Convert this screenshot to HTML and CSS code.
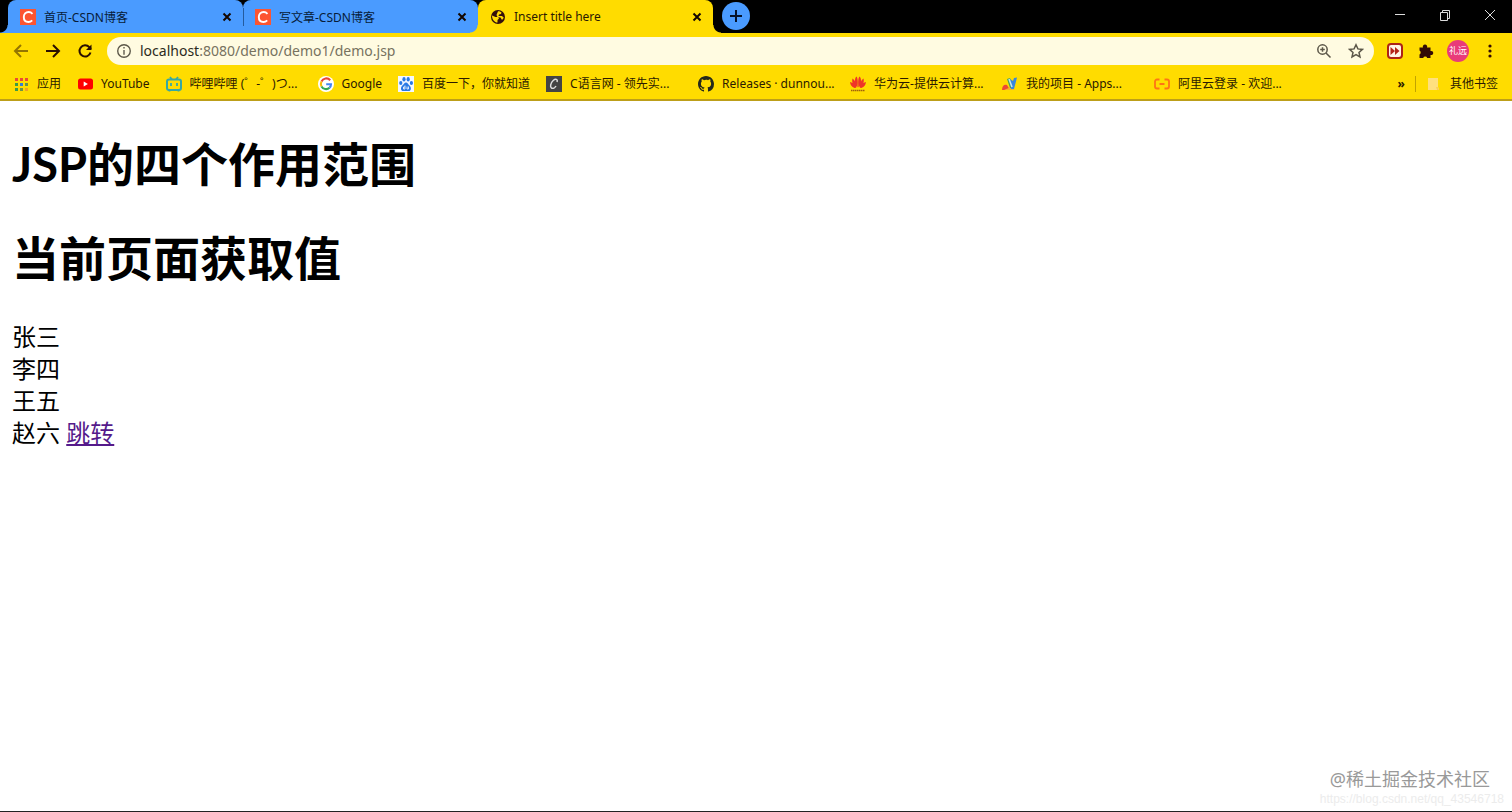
FILE: index.html
```html
<!DOCTYPE html>
<html lang="zh-CN">
<head>
    <meta charset="UTF-8">
    <meta name="viewport" content="width=device-width, initial-scale=1.0">
    <title>Insert title here</title>
    <link rel="stylesheet" href="styles.css">
</head>
<body>
    <header class="browser">
        <div class="tab-strip">
            <div class="tab flare-left">
                <svg class="icon" viewBox="0 0 16 16"><rect width="16" height="16" fill="#fc5531"/><path d="M12.500 4.800C11.300 3.500 10.200 3 8.700 3 5.700 3 3.800 5.200 3.800 8.100c0 3 1.800 4.900 4.600 4.900 1.500 0 2.700-.5 3.800-1.600" fill="none" stroke="#fff" stroke-width="1.900"/></svg>
                <span class="tab-title">首页-CSDN博客</span>
                <button class="tab-close" aria-label="关闭"><svg viewBox="0 0 10 10"><path d="M1.500 1.500l7 7M8.500 1.500l-7 7"/></svg></button>
            </div>
            <div class="tab divided">
                <svg class="icon" viewBox="0 0 16 16"><rect width="16" height="16" fill="#fc5531"/><path d="M12.500 4.800C11.300 3.500 10.200 3 8.700 3 5.700 3 3.800 5.200 3.800 8.100c0 3 1.800 4.900 4.600 4.900 1.500 0 2.700-.5 3.800-1.600" fill="none" stroke="#fff" stroke-width="1.900"/></svg>
                <span class="tab-title">写文章-CSDN博客</span>
                <button class="tab-close" aria-label="关闭"><svg viewBox="0 0 10 10"><path d="M1.500 1.500l7 7M8.500 1.500l-7 7"/></svg></button>
            </div>
            <div class="tab active flare-left flare-right">
                <svg class="icon" viewBox="0 0 16 16"><circle cx="8" cy="8" r="7" fill="#33100c"/><path d="M2 6.500l3.500 1.500h2.500l1 1.500-1.500 1.500v2.600C4.500 13.500 2 10.500 2 6.500zM8 2.200c1.500 0 2.500.3 3.500 1.300l-.5 1.500-2 .5-.5 1.500h3.500l1.800 1.800-1.800 2.200-1.500-2.500-3-.5-1-2z" fill="#ffdc00"/></svg>
                <span class="tab-title">Insert title here</span>
                <button class="tab-close" aria-label="关闭"><svg viewBox="0 0 10 10"><path d="M1.500 1.500l7 7M8.500 1.500l-7 7"/></svg></button>
            </div>
            <button class="new-tab" aria-label="新标签页"><svg viewBox="0 0 14 14"><path d="M7 1v12M1 7h12"/></svg></button>
            <div class="window-buttons">
                <button aria-label="最小化"><svg viewBox="0 0 12 12"><path d="M1 5.500h10"/></svg></button>
                <button aria-label="还原"><svg viewBox="0 0 12 12"><path d="M1.500 3.500h7v8h-7zM3.500 3.500v-2h7v8h-2"/></svg></button>
                <button aria-label="关闭窗口"><svg viewBox="0 0 12 12"><path d="M1 1l10 10M11 1L1 11"/></svg></button>
            </div>
        </div>

        <div class="toolbar">
            <button class="nav faded" aria-label="后退"><svg viewBox="0 0 16 16"><path d="M15 8H2M8 2L2 8l6 6"/></svg></button>
            <button class="nav" aria-label="前进"><svg viewBox="0 0 16 16"><path d="M1 8h13M8 2l6 6-6 6"/></svg></button>
            <button class="nav" aria-label="重新加载"><svg viewBox="0 0 16 16"><path d="M13.500 9.500A5.600 5.600 0 1 1 12.300 4.200L14 6"/><path class="solid" d="M14.500 1.500v5.500H9z"/></svg></button>
            <div class="address">
                <svg class="info" viewBox="0 0 14 14"><circle cx="7" cy="7" r="5.500"/><path d="M7 6.200v4M7 3.600v1.300"/></svg>
                <a class="url" href="#"><span class="host">localhost</span>:8080/demo/demo1/demo.jsp</a>
                <button class="tool" aria-label="缩放"><svg viewBox="0 0 16 16"><circle cx="6.500" cy="6.500" r="4.700"/><path d="M10 10l4.500 4.500M4.200 6.500h4.600M6.500 4.200v4.600"/></svg></button>
                <button class="tool" aria-label="加入书签"><svg viewBox="0 0 16 16"><path d="M8 1.800l1.900 4.100 4.500.5-3.400 3 1 4.500L8 11.600l-4 2.300 1-4.500-3.400-3 4.500-.5z"/></svg></button>
            </div>
            <div class="extensions">
                <button aria-label="视频加速"><svg viewBox="0 0 16 16"><rect x="1" y="1" width="14" height="14" rx="3" fill="#fff4e6" stroke="#ad2216" stroke-width="2"/><path d="M3.500 4l4.500 4-4.500 4zM8 4l4.500 4L8 12z" fill="#b42318"/></svg></button>
                <button aria-label="扩展程序"><svg viewBox="0 0 16 16"><path d="M1.500 4.500H5a2.200 2.200 0 1 1 4 0h3.500V8a2.100 2.100 0 1 1 0 4v3H9.200a2.100 2.100 0 0 0-4 0H1.500v-3.600a2.100 2.100 0 0 0 0-3.800z" fill="#330b06"/></svg></button>
                <button class="avatar">礼远</button>
                <button aria-label="菜单"><svg viewBox="0 0 16 16" fill="#330b06"><circle cx="8" cy="3" r="1.600"/><circle cx="8" cy="8" r="1.600"/><circle cx="8" cy="13" r="1.600"/></svg></button>
            </div>
        </div>

        <nav class="bookmarks">
            <a href="#" class="bookmark">
                <svg class="icon" viewBox="0 0 16 16"><path d="M2 2h3v3H2zM7 2h3v3H7zM12 2h3v3h-3z" fill="#e94b35"/><path d="M2 7h3v3H2zM2 12h3v3H2z" fill="#3e9b45"/><path d="M7 7h3v3H7z" fill="#367fd3"/><path d="M12 7h3v3h-3zM7 12h3v3H7z" fill="#6b9448"/><path d="M12 12h3v3h-3z" fill="#f1a521"/></svg>
                <span>应用</span>
            </a>
            <a href="#" class="bookmark">
                <svg class="icon" viewBox="0 0 16 16"><rect x="1" y="2.500" width="15" height="11" rx="2.500" fill="#f00"/><path d="M6.700 5.600l4.200 2.400-4.200 2.400z" fill="#fff"/></svg>
                <span>YouTube</span>
            </a>
            <a href="#" class="bookmark wide">
                <svg class="icon" viewBox="0 0 16 16"><rect x="1" y="3.500" width="14" height="10.500" rx="2" fill="none" stroke="#36a8a4" stroke-width="2"/><path d="M4 1l2 2.500M12 1l-2 2.500M5 7v3M11 7v3M3.500 14v1.500M12.500 14v1.500" fill="none" stroke="#36a8a4" stroke-width="1.800"/></svg>
                <span>哔哩哔哩 (゜-゜)つ...</span>
            </a>
            <a href="#" class="bookmark">
                <svg class="icon" viewBox="0 0 16 16"><circle cx="8" cy="8" r="8" fill="#fff"/><g fill="none" stroke-width="2.100"><path d="M12.200 4.200A5.200 5.200 0 0 0 3.500 5.500" stroke="#ea4335"/><path d="M3.500 5.500a5.200 5.200 0 0 0 0 5" stroke="#fbbc05"/><path d="M3.500 10.500a5.200 5.200 0 0 0 8 1.300" stroke="#34a853"/><path d="M11.500 11.800A5.200 5.200 0 0 0 13 8.200H8.200" stroke="#4285f4"/></g></svg>
                <span>Google</span>
            </a>
            <a href="#" class="bookmark">
                <svg class="icon" viewBox="0 0 16 16"><rect width="16" height="16" fill="#f2f7ff"/><g fill="#2879e5"><ellipse cx="2.800" cy="7" rx="1.600" ry="2.100"/><ellipse cx="6" cy="3.300" rx="1.600" ry="2.200"/><ellipse cx="10.200" cy="3.300" rx="1.600" ry="2.200"/><ellipse cx="13.400" cy="7" rx="1.600" ry="2.100"/><path d="M8 6.500c1.600 0 2 1.600 3.500 2.900 2 1.700 2 5.600-1 5.600H5.400c-3 0-3-3.900-1-5.600C6 8.100 6.400 6.500 8 6.500z"/></g><path d="M7 9.500v3.500H5.500v-2H7M9 10.500V13h1.500v-2.500" fill="none" stroke="#fff" stroke-width=".8"/></svg>
                <span>百度一下，你就知道</span>
            </a>
            <a href="#" class="bookmark wide">
                <svg class="icon" viewBox="0 0 16 16"><rect width="16" height="16" fill="#444"/><path d="M11 6c1-3-1.500-3.500-3.800-1.500C4.500 7 3.800 11 5.500 12c1.500.8 3.500-.2 4.500-2" fill="none" stroke="#ddd" stroke-width="1.500"/></svg>
                <span>C语言网 - 领先实...</span>
            </a>
            <a href="#" class="bookmark wide">
                <svg class="icon" viewBox="0 0 16 16"><path fill="#24291b" d="M8 0C3.580 0 0 3.580 0 8c0 3.540 2.290 6.530 5.470 7.590.4.070.55-.17.55-.38 0-.19-.01-.82-.01-1.490-2.010.37-2.530-.49-2.690-.94-.09-.23-.48-.94-.82-1.130-.28-.15-.68-.52-.01-.53.63-.01 1.080.58 1.230.82.72 1.210 1.870.87 2.330.66.07-.52.28-.87.51-1.070-1.780-.2-3.640-.89-3.640-3.950 0-.87.31-1.590.82-2.150-.08-.2-.36-1.020.08-2.120 0 0 .67-.21 2.200.82A7.600 7.600 0 0 1 8 3.860c.68 0 1.360.09 2 .27 1.530-1.040 2.200-.82 2.200-.82.44 1.100.16 1.920.08 2.120.51.56.82 1.270.82 2.150 0 3.070-1.870 3.750-3.650 3.950.29.25.54.73.54 1.480 0 1.070-.01 1.930-.01 2.200 0 .21.15.46.55.38A8.010 8.010 0 0 0 16 8c0-4.420-3.580-8-8-8z"/></svg>
                <span>Releases · dunnou...</span>
            </a>
            <a href="#" class="bookmark wide">
                <svg class="icon" viewBox="0 0 16 16"><g fill="#ef3528"><path d="M7.500 11.500C4 8 4.500 2 6.500 0.500 8 2 8 7 7.500 11.500zM8.500 11.500C12 8 11.500 2 9.500 0.500 8 2 8 7 8.500 11.500zM6.500 11.500C3 10 1.500 6 2.500 2.500 5 4 6 8 6.500 11.500zM9.500 11.500c3.500-1.500 5-5.500 4-9C11 4 10 8 9.500 11.500zM6 12C2.500 12 .5 9.500 0 6c3 .5 5 3 6 6zM10 12c3.500 0 5.500-2.500 6-6-3 .5-5 3-6 6z"/></g><path d="M1 14.500h14" stroke="#a1600c" stroke-width="1.500" stroke-dasharray="1.500 .5"/></svg>
                <span>华为云-提供云计算...</span>
            </a>
            <a href="#" class="bookmark wide">
                <svg class="icon" viewBox="0 0 16 16"><path d="M0 14c0-4 2-6 5-5l3 5z" fill="#ed4a35"/><path d="M2 14h11l-4-3z" fill="#f6b52a"/><path d="M5 3l3-1 3 10H8z" fill="#45a45a"/><path d="M8 3l3 2 1-3 3-.5-3 11.500H9z" fill="#3986dc"/><path d="M7 3l3 8" stroke="#c9e5ed" stroke-width="1.500"/></svg>
                <span>我的项目 - Apps...</span>
            </a>
            <a href="#" class="bookmark wide">
                <svg class="icon" viewBox="0 0 16 16"><path d="M5.500 3.500H3a2 2 0 0 0-2 2v5a2 2 0 0 0 2 2h2.500M10.500 3.500H13a2 2 0 0 1 2 2v5a2 2 0 0 1-2 2h-2.500M5.500 8h5" fill="none" stroke="#ff7415" stroke-width="1.800"/></svg>
                <span>阿里云登录 - 欢迎...</span>
            </a>
            <div class="bookmarks-end">
                <button class="overflow" aria-label="更多书签">»</button>
                <a href="#" class="bookmark other">
                    <svg class="icon" viewBox="0 0 16 16"><path d="M2 2h10v9l1 2v1H2z" fill="#ffe07f"/><path d="M10 11h2l1 3h-2z" fill="#fbcf58"/></svg>
                    <span>其他书签</span>
                </a>
            </div>
        </nav>
    </header>

    <main class="page">
        <h1>JSP的四个作用范围</h1>
        <h1>当前页面获取值</h1>
        张三<br>
        李四<br>
        王五<br>
        赵六 <a href="#">跳转</a>
    </main>

    <footer class="watermark">
        <p class="community">@稀土掘金技术社区</p>
        <p class="source">https://blog.csdn.net/qq_43546718</p>
    </footer>
</body>
</html>
```
FILE: styles.css
```css
* {
    box-sizing: border-box;
}

body {
    margin: 0;
    min-height: 100vh;
    display: flex;
    flex-direction: column;
    background: #fff;
    color: #000;
    font-family: "Noto Sans", "Noto Sans CJK SC", sans-serif;
    border-bottom: 1px solid #222;
}

button {
    display: flex;
    align-items: center;
    justify-content: center;
    padding: 0;
    border: 0;
    background: none;
    font: inherit;
    color: inherit;
}

.icon {
    width: 16px;
    height: 16px;
    flex: none;
}

.browser {
    background: #ffdc00;
    border-bottom: 2px solid #bd9f19;
    font-size: 12px;
    color: #2b1a00;
}

/* 标签栏 */
.tab-strip {
    display: flex;
    height: 33px;
    padding-left: 8px;
    background: #000;
}

.tab {
    --tab-color: #4a9bff;
    position: relative;
    flex: 0 1 235px;
    display: flex;
    align-items: center;
    gap: 8px;
    padding: 0 10px 0 12px;
    background: var(--tab-color);
    border-radius: 8px 8px 0 0;
    color: #071c38;
}

.divided::before {
    content: "";
    position: absolute;
    left: 0;
    top: 8px;
    height: 18px;
    border-left: 1px solid #245b9e;
}

.tab.active {
    --tab-color: #ffdc00;
    color: #2b1a00;
}

/* 标签底部的圆弧 */
.flare-left::before,
.flare-right::after {
    content: "";
    position: absolute;
    bottom: 0;
    width: 8px;
    height: 8px;
}

.flare-left::before {
    left: -8px;
    background: radial-gradient(circle at 0 0, transparent 7px, var(--tab-color) 8px);
}

.flare-right::after {
    right: -8px;
    background: radial-gradient(circle at 100% 0, transparent 7px, var(--tab-color) 8px);
}

.tab-title {
    flex: 1;
    white-space: nowrap;
}

.tab-close {
    width: 12px;
    height: 12px;
}

.tab-close svg {
    width: 10px;
    height: 10px;
    stroke: #130600;
    stroke-width: 2;
}

.new-tab {
    width: 28px;
    height: 28px;
    margin: 2px 0 0 9px;
    border-radius: 50%;
    background: #4a9bff;
}

.new-tab svg {
    width: 14px;
    height: 14px;
    stroke: #06132b;
    stroke-width: 2;
}

.window-buttons {
    display: flex;
    height: 29px;
    margin-left: auto;
}

.window-buttons button {
    width: 45px;
}

.window-buttons svg {
    width: 12px;
    height: 12px;
    fill: none;
    stroke: #ddd;
}

/* 地址栏 */
.toolbar {
    display: flex;
    align-items: center;
    height: 35px;
    padding: 0 12px 0 11px;
}

.nav {
    width: 20px;
    height: 28px;
    margin-right: 12px;
}

.nav svg {
    width: 16px;
    height: 16px;
    fill: none;
    stroke: #2b1000;
    stroke-width: 2;
}

.nav .solid {
    fill: #2b1000;
    stroke: none;
}

.faded {
    opacity: 0.5;
}

.address {
    flex: 1;
    display: flex;
    align-items: center;
    height: 28px;
    padding: 0 8px 0 9px;
    border-radius: 14px;
    background: #fffbe1;
}

.address svg {
    width: 16px;
    height: 16px;
    fill: none;
    stroke: #5c5749;
    stroke-width: 1.5;
}

.address .info {
    stroke-width: 1.2;
}

.url {
    flex: 1;
    margin-left: 8px;
    font-size: 14px;
    line-height: 20px;
    color: #77725f;
    text-decoration: none;
}

.host {
    color: #2b2a20;
}

.tool {
    width: 20px;
    margin-left: 12px;
}

.extensions {
    display: flex;
    align-items: center;
    gap: 11px;
    margin-left: 11px;
}

.extensions button {
    width: 20px;
}

.extensions svg {
    width: 16px;
    height: 16px;
}

.extensions .avatar {
    width: 22px;
    height: 22px;
    border-radius: 50%;
    background: #e93b79;
    color: #fff;
    font-size: 9px;
    white-space: nowrap;
}

/* 书签栏 */
.bookmarks {
    display: flex;
    align-items: center;
    gap: 16px;
    height: 31px;
    padding: 0 14px 0 13px;
}

.bookmark {
    display: flex;
    align-items: center;
    gap: 8px;
    line-height: 16px;
    color: inherit;
    text-decoration: none;
    white-space: nowrap;
}

.wide {
    width: 136px;
}

.bookmarks-end {
    display: flex;
    align-items: center;
    gap: 10px;
    margin-left: auto;
}

.overflow {
    font-size: 12px;
    font-weight: bold;
    line-height: 16px;
}

.other {
    padding-left: 10px;
    border-left: 1px solid #c2a300;
}

/* 页面内容 */
.page {
    flex: 1;
    padding: 0 12px;
    font-size: 24px;
    line-height: 32px;
}

.page h1 {
    margin: 32px 0;
    font-family: Lato, "Noto Sans CJK SC", sans-serif;
    font-size: 47px;
    line-height: 62px;
}

.page a {
    color: #551a8b;
}

.watermark {
    padding-bottom: 3px;
    text-align: right;
}

.watermark p {
    margin: 0;
}

.community {
    padding-right: 22px;
    font-size: 18px;
    line-height: 22px;
    color: #999;
}

.source {
    padding-right: 8px;
    font-family: "Liberation Sans", Arial, sans-serif;
    font-size: 12px;
    line-height: 18px;
    color: #ececec;
}
```
